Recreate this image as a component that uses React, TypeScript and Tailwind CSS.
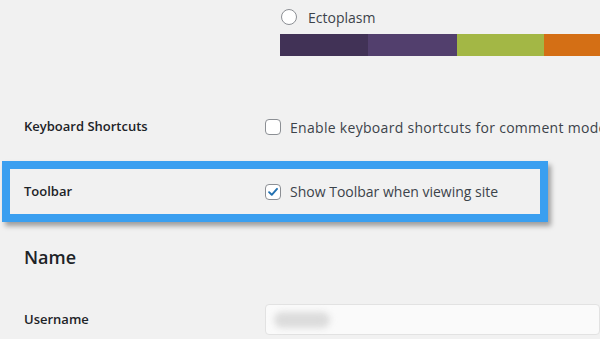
import React from 'react'

function Checkbox({ checked }: { checked?: boolean }) {
  return (
    <span className="flex h-4 w-4 shrink-0 items-center justify-center rounded-[4px] border border-[#8c8f94] bg-white">
      {checked && (
        <svg viewBox="0 0 16 16" className="h-[14px] w-[14px]">
          <path d="M3.5 8.2 L6.6 11.2 L12.6 4.4" fill="none" stroke="#2271b1" strokeWidth="2.2" strokeLinecap="round" strokeLinejoin="round" />
        </svg>
      )}
    </span>
  )
}

export default function App() {
  return (
    <div className="h-[339px] w-[600px] overflow-hidden bg-[#f1f1f1] text-[#1d2327]" style={{ fontFamily: '"Open Sans", "Noto Sans", sans-serif' }}>
      {/* admin colour scheme */}
      <div className="pl-[281px] pt-[9px]">
        <label className="flex h-4 items-center gap-[11px]">
          <span className="h-4 w-4 rounded-full border border-[#8c8f94] bg-white" />
          <span className="text-[14px] text-[#3c434a]">Ectoplasm</span>
        </label>
        <div className="ml-[-1px] mt-[9px] flex h-[22px] w-[352px]">
          <div className="w-[88px] bg-[#413256]" />
          <div className="w-[89px] bg-[#523f6d]" />
          <div className="w-[87px] bg-[#a3b745]" />
          <div className="w-[88px] bg-[#d46f15]" />
        </div>
      </div>

      {/* keyboard shortcuts */}
      <div className="mt-[63px] flex h-4 items-center">
        <div className="w-[265px] shrink-0 pl-[24px] text-[13px] font-semibold">Keyboard Shortcuts</div>
        <label className="flex items-center gap-[9px] whitespace-nowrap text-[14px] tracking-[0.3px] text-[#3c434a]">
          <Checkbox />
          Enable keyboard shortcuts for comment moderation.
        </label>
      </div>

      {/* highlighted toolbar row */}
      <div className="ml-[2px] mt-[26px] flex h-[61px] w-[546px] items-center border-[8px] border-[#3a9ff0] shadow-[3px_4px_5px_rgba(0,0,0,0.35)]">
        <div className="w-[255px] shrink-0 pl-[14px] text-[13px] font-semibold">Toolbar</div>
        <label className="flex items-center gap-[9px] text-[14px] text-[#3c434a]">
          <Checkbox checked />
          Show Toolbar when viewing site
        </label>
      </div>

      {/* name section */}
      <h2 className="mt-[24px] pl-[24px] text-[18px] font-semibold leading-[22px]">Name</h2>

      <div className="mt-[36px] flex items-center">
        <div className="w-[265px] shrink-0 pl-[24px] text-[13px] font-semibold">Username</div>
        <div className="flex h-[31px] flex-1 items-center rounded-[4px] border border-[#e2e2e2] bg-[#fafafa] pl-[8px]">
          <span className="h-[16px] w-[56px] rounded-full bg-[#dcdcdc] blur-[3px]" />
        </div>
      </div>
    </div>
  )
}
